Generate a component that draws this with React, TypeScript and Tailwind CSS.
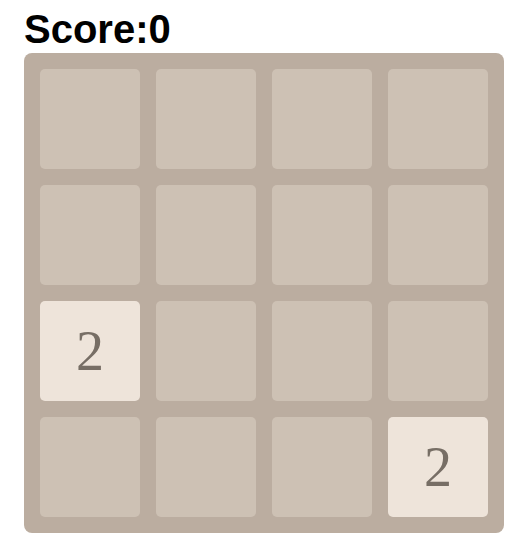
const board: number[][] = [
  [0, 0, 0, 0],
  [0, 0, 0, 0],
  [2, 0, 0, 0],
  [0, 0, 0, 2],
];

function Tile({ value }: { value: number }) {
  if (!value) {
    return <div className="h-[100px] w-[100px] rounded-[5px] bg-[#cdc1b4]" />;
  }
  return (
    <div
      className="flex h-[100px] w-[100px] items-center justify-center rounded-[5px] bg-[#eee4da] text-[56px] leading-none text-[#776e65]"
      style={{ fontFamily: '"Liberation Serif", serif' }}
    >
      {value}
    </div>
  );
}

export default function App() {
  const score = 0;
  return (
    <div className="min-h-screen bg-white px-6 pt-[6px]">
      <h1
        className="text-[40px] font-bold leading-[46px] text-black"
        style={{ fontFamily: '"Liberation Sans", Arial, sans-serif' }}
      >
        Score:{score}
      </h1>
      <div className="mt-px grid w-[480px] grid-cols-4 gap-4 rounded-[8px] bg-[#bbada0] p-4">
        {board.flat().map((v, i) => (
          <Tile key={i} value={v} />
        ))}
      </div>
    </div>
  );
}
